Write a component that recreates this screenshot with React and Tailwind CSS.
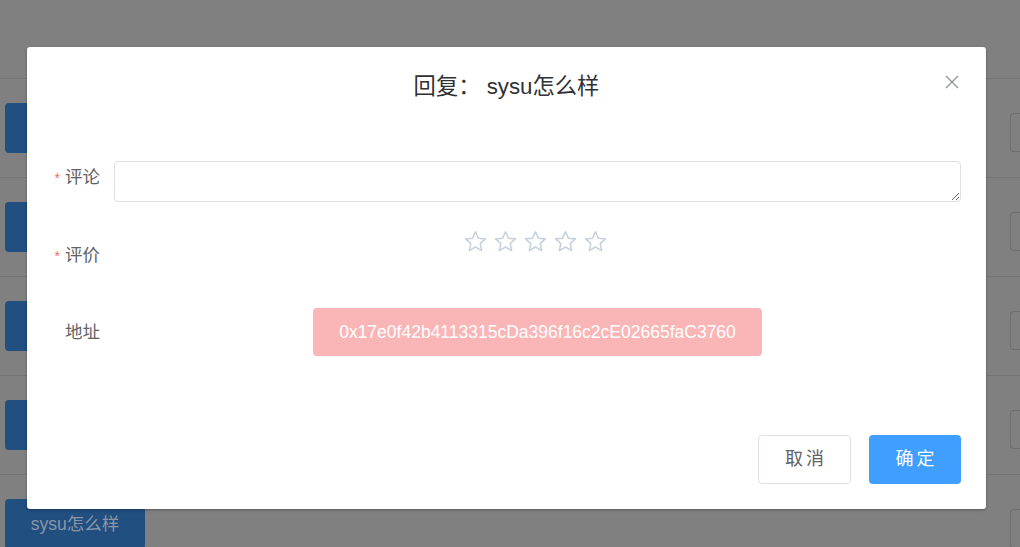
import React from "react";

const rows = ["", "", "", "", "sysu怎么样"];

const StarOutline = () => (
  <svg width="25" height="25" viewBox="0 0 24 24" fill="none">
    <path
      d="M12 2.6l2.8 6.2 6.7.7-5 4.6 1.4 6.6L12 17.3l-5.9 3.4 1.4-6.6-5-4.6 6.7-.7z"
      stroke="#c6d1de"
      strokeWidth="1.5"
      strokeLinejoin="round"
    />
  </svg>
);

const CloseIcon = () => (
  <svg width="14" height="14" viewBox="0 0 14 14">
    <path d="M1 1l12 12M13 1L1 13" stroke="#909399" strokeWidth="1.3" />
  </svg>
);

export default function App() {
  return (
    <div
      className="relative w-[1020px] h-[547px] overflow-hidden bg-[#808080]"
      style={{ fontFamily: '"Liberation Sans", "Noto Sans CJK SC", sans-serif' }}
    >
      {/* page behind the mask */}
      <div className="pt-[78px]">
        {rows.map((label, i) => (
          <div key={i} className="h-[99px] border-t border-[#747474] flex items-start justify-between">
            <div className="mt-[24px] ml-[5px] w-[140px] h-[50px] rounded-[4px] bg-[#204f80] flex items-center justify-center text-[17.5px] text-[#8a96a6]">
              {label}
            </div>
            <div className="mt-[34px] w-[10px] h-[39px] rounded-l-[4px] border border-r-0 border-[#6e6e6e]" />
          </div>
        ))}
      </div>

      {/* dialog */}
      <div className="absolute left-[27px] top-[47px] w-[959px] h-[462px] bg-white rounded-[3px] shadow-[0_1px_3px_rgba(0,0,0,0.3)]">
        <div className="relative pt-[26px] text-center text-[22.3px] leading-[28px] text-[#303133]">
          回复： sysu怎么样
          <button className="absolute top-[28px] right-[27px] leading-none">
            <CloseIcon />
          </button>
        </div>

        <div className="mt-[60px] pr-[25px]">
          <div className="flex">
            <div className="w-[73px] shrink-0 text-right text-[17.5px] leading-[32px] text-[#606266]">
              <span className="text-[#f56c6c] text-[14px] mr-[5px]">*</span>评论
            </div>
            <textarea
              rows={1}
              className="ml-[14px] flex-1 h-[41px] border border-[#dcdfe6] rounded-[4px] px-[15px] py-[5px] text-[14px] outline-none"
            />
          </div>

          <div className="flex mt-[27px]">
            <div className="w-[73px] shrink-0 mt-[10px] text-right text-[17.5px] leading-[32px] text-[#606266]">
              <span className="text-[#f56c6c] text-[14px] mr-[5px]">*</span>评价
            </div>
            <div className="ml-[14px] flex-1 flex justify-center gap-[5px] h-[24px] items-center pr-[4px]">
              {[0, 1, 2, 3, 4].map((s) => (
                <StarOutline key={s} />
              ))}
            </div>
          </div>

          <div className="flex items-center mt-[36px]">
            <div className="w-[73px] shrink-0 text-right text-[17.5px] leading-[32px] text-[#606266]">
              地址
            </div>
            <div className="ml-[14px] flex-1 flex justify-center">
              <div className="w-[449px] h-[48px] rounded-[4px] bg-[#fab6b6] flex items-center justify-center text-white text-[17.5px]">
                0x17e0f42b4113315cDa396f16c2cE02665faC3760
              </div>
            </div>
          </div>

          <div className="flex justify-end gap-[18px] mt-[79px]">
            <button className="w-[93px] h-[49px] rounded-[4px] border border-[#dcdfe6] bg-white text-[18px] tracking-[3px] text-[#606266] pl-[3px]">
              取消
            </button>
            <button className="w-[92px] h-[49px] rounded-[4px] bg-[#409eff] text-[18px] tracking-[3px] text-white pl-[3px]">
              确定
            </button>
          </div>
        </div>
      </div>
    </div>
  );
}
